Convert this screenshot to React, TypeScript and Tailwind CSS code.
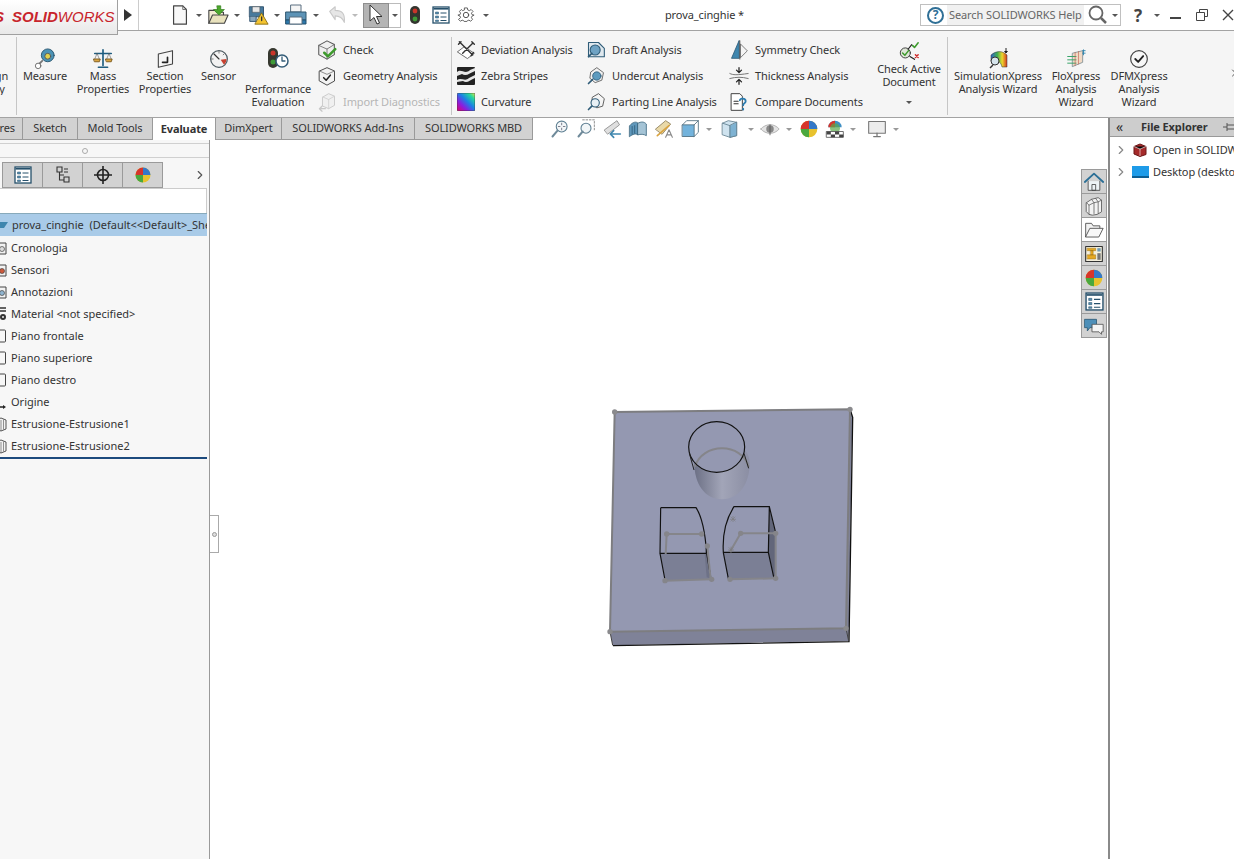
import React from 'react';
import { ChevronRight } from 'lucide-react';

type IconProps = { className?: string };

const Ico = ({ size = 22, children }: { size?: number; children: React.ReactNode }) => (
  <svg width={size} height={size} viewBox="0 0 24 24" fill="none" strokeLinejoin="round" strokeLinecap="round">
    {children}
  </svg>
);

const Drop = ({ className = '' }: IconProps) => (
  <span className={`inline-block w-0 h-0 border-l-[3px] border-r-[3px] border-t-[3px] border-l-transparent border-r-transparent border-t-[#555] ${className}`} />
);

/* ---------- top bar icons ---------- */
const NewDoc = () => (
  <Ico><path d="M5 2h10l4 4v16H5z" fill="#f8f8f8" stroke="#444" strokeWidth="1.3" /><path d="M15 2v4h4" stroke="#666" /></Ico>
);
const OpenDoc = () => (
  <Ico size={24}><path d="M2 21V7h7l2 2h7v3" fill="#f2ecd0" stroke="#444" strokeWidth="1.2" /><path d="M2 21l4-9h17l-4 9z" fill="#e9e2bd" stroke="#444" strokeWidth="1.2" /><path d="M11 2h4v4h4l-6 6-6-6h4z" fill="#4da82d" stroke="#2c7a16" strokeWidth=".7" /></Ico>
);
const SaveWarn = () => (
  <Ico><path d="M3 3h15v11H3z" fill="#47799c" stroke="#2d4f6b" /><path d="M6 3h8v6H6z" fill="#e8e8e8" stroke="#555" strokeWidth=".6" /><path d="M3 14v5h7v-5" fill="#8ba8bd" stroke="#2d4f6b" /><path d="M16 10l7 12H9z" fill="#f4c430" stroke="#8a6d10" /><path d="M16 14v4" stroke="#333" strokeWidth="1.4" /></Ico>
);
const PrintIcon = () => (
  <Ico size={24}><path d="M7 2h10v7H7z" fill="#f5f5f5" stroke="#5a6f80" /><path d="M2 9h20v8H2z" fill="#5d93b6" stroke="#2f566f" /><path d="M2 17h20v4H2z" fill="#2d78ab" stroke="#25516d" /><path d="M6 14h12v7H6z" fill="#fff" stroke="#5a6f80" /></Ico>
);
const UndoIcon = () => (
  <Ico><path d="M4 8l6-5v4c7 0 11 3 10 13-2-5-5-7-10-7v4z" fill="#e6e6e6" stroke="#c8c8c8" strokeWidth="1.2" /></Ico>
);
const CursorIcon = () => (
  <svg width="16" height="22" viewBox="0 0 16 22"><path d="M2 1v16l4-3.5 3 6.5 2.5-1-3-6.5h5.5z" fill="#fff" stroke="#333" strokeWidth="1" strokeLinejoin="round" /></svg>
);
const Traffic = ({ size = 20 }: { size?: number }) => (
  <svg width={size * 0.6} height={size} viewBox="0 0 12 20"><rect x="1" y="1" width="10" height="18" rx="5" fill="#33352f" /><circle cx="6" cy="6" r="2.4" fill="#c9352a" /><circle cx="6" cy="14" r="2.4" fill="#3f9a37" /></svg>
);
const ListIcon = ({ size = 18 }: { size?: number }) => (
  <svg width={size} height={size} viewBox="0 0 18 18"><rect x="1" y="1" width="16" height="16" fill="#fff" stroke="#26506b" strokeWidth="1.3" /><path d="M1.5 2h15v1.6h-15z" fill="#26506b" /><path d="M3.5 6h3v2h-3zM3.5 10h3v2h-3zM3.5 14h3v1.5h-3z" fill="#5b90b2" stroke="#26506b" strokeWidth=".5" /><path d="M8.5 7h6M8.5 11h6M8.5 14.500h6" stroke="#26506b" strokeWidth="1" /></svg>
);
const GearIcon = () => (
  <Ico size={18}><path d="M10 2h4l.6 3 2.400 1 2.600-1.700 2.800 2.800L20 9.700l1 2.300 3 .6v0l-3 1.400-1 2.300 1.700 2.600-2.800 2.800-2.600-1.700-2.400 1-.6 1h-4l-.6-1-2.400-1-2.600 1.700-2.800-2.800L4 16.300 3 14l-3-1.400 3-.6 1-2.300-1.700-2.600 2.800-2.800L7 6l2.400-1z" stroke="#444" strokeWidth="1.200" transform="translate(1.200 .8) scale(.9)" /><circle cx="12" cy="12" r="3.600" stroke="#444" strokeWidth="1.200" /></Ico>
);

/* ---------- ribbon icons ---------- */
const Measure = () => (
  <Ico size={22}><circle cx="15" cy="8" r="7" fill="#4c93b5" stroke="#27546d" /><circle cx="15" cy="9" r="3.200" fill="#e2d34d" stroke="#555" /><path d="M9 14l-4 4" stroke="#777" strokeWidth="2" /><circle cx="4.500" cy="19.500" r="3" fill="#fff" stroke="#666" /></Ico>
);
const MassIcon = () => (
  <Ico size={22}><path d="M12 2v17M3 6h18M7 21h10" stroke="#1f5d80" strokeWidth="1.800" /><path d="M2 12h7l-1 3H3zM15 12h7l-1 3h-5z" fill="#d9a441" stroke="#7d5a1a" /><path d="M5.500 6L3 12M5.500 6L8 12M18.500 6L16 12M18.500 6L21 12" stroke="#555" strokeWidth=".6" /></Ico>
);
const SectionIcon = () => (
  <Ico size={20}><path d="M4 6l17-4v16L4 22z" fill="#f5f5f5" stroke="#444" strokeWidth="1.300" /><path d="M9 16h6v-6" stroke="#222" strokeWidth="2" /></Ico>
);
const SensorIcon = () => (
  <Ico size={20}><circle cx="12" cy="12" r="10" fill="#f2f2f2" stroke="#4d5a60" strokeWidth="1.500" /><path d="M12 12L6 6" stroke="#333" strokeWidth="1.400" /><path d="M21 12a9 9 0 0 1-3 7l-4-6z" fill="#c8402f" /><path d="M3 12h2M12 3v2M18 6l-1 1" stroke="#666" /></Ico>
);
const PerfIcon = () => (
  <Ico size={24}><rect x="2" y="2" width="10" height="20" rx="5" fill="#36382f" /><circle cx="7" cy="7" r="2.500" fill="#c9352a" /><circle cx="7" cy="16" r="2.500" fill="#3f9a37" /><circle cx="16" cy="15" r="6" fill="#fff" stroke="#355d78" strokeWidth="1.500" /><path d="M16 11v4h3" stroke="#355d78" strokeWidth="1.300" /></Ico>
);
const Cube = ({ check = 'green' }: { check?: string }) => (
  <Ico size={22}><path d="M3 7l9-5 8 4v11l-8 5-9-5z" fill="#efefef" stroke="#555" strokeWidth="1.100" /><path d="M3 7l9 4 8-5M12 11v11" stroke="#666" strokeWidth=".9" /><path d="M9 15l4 4 8-8" stroke={check} strokeWidth="2.800" /></Ico>
);
const GeoIcon = () => (
  <Ico size={20}><path d="M3 6l9-4 9 4v12l-9 5-9-5z" fill="#f3f3f3" stroke="#4e4e4e" strokeWidth="1.200" /><path d="M3 6l9 4 9-4" stroke="#777" /><path d="M8 14l3 3 5-6" stroke="#222" strokeWidth="1.800" /></Ico>
);
const ImportIcon = () => (
  <Ico size={20}><path d="M7 6l7-4 7 3v11l-7 4-7-3z" fill="#f0f0f0" stroke="#c4c4c4" /><path d="M7 6l7 3 7-4M14 9v11" stroke="#cfcfcf" /><path d="M10 20H3M6 17l-3 3 3 3" stroke="#c8c8c8" strokeWidth="1.600" /></Ico>
);
const DevIcon = () => (
  <Ico size={20}><path d="M2 14l8-6 12 8-8 6z" fill="#fff" stroke="#555" /><path d="M4 2l16 16M20 4L8 16M6 2l-3 3M19 2l3 3M21 15l-3 4" stroke="#333" strokeWidth="1.700" /></Ico>
);
const Zebra = () => (
  <svg width="18" height="18" viewBox="0 0 18 18"><rect width="18" height="18" rx="1" fill="#222" /><path d="M0 5c4-4 8 3 13-2l5-2v3c-5 2-9 6-13 3L0 9zM0 13c4-3 8 2 12-2l6-3v3c-5 2-8 6-12 3l-6 1z" fill="#e6e6e6" /></svg>
);
const Curv = () => (
  <svg width="18" height="18" viewBox="0 0 18 18">
    <defs><linearGradient id="cg" x1="0" y1="1" x2="1" y2="0"><stop offset="0" stopColor="#e0006a" /><stop offset=".3" stopColor="#8a1ee0" /><stop offset=".55" stopColor="#1c7fe6" /><stop offset=".8" stopColor="#22d6a0" /><stop offset="1" stopColor="#d9e845" /></linearGradient></defs>
    <rect width="18" height="18" rx="1.500" fill="url(#cg)" stroke="#333" strokeWidth=".6" />
  </svg>
);
const DraftIcon = () => (
  <Ico size={20}><path d="M3 3h12l7 7v10H3z" fill="#dfe8ee" stroke="#2f5c78" strokeWidth="1.300" /><circle cx="11" cy="12" r="6" fill="#6fa3c4" stroke="#2f5c78" strokeWidth="1.300" /><path d="M3 20l4-4" stroke="#2f5c78" strokeWidth="2" /></Ico>
);
const UndercutIcon = () => (
  <Ico size={20}><path d="M6 7l7-5 8 6-2 9-8 3-6-5z" fill="#f1f1f1" stroke="#555" /><circle cx="13" cy="12" r="5" fill="#5d9bbf" stroke="#2f5c78" /><path d="M8 16l-5 5" stroke="#2f5c78" strokeWidth="2" /></Ico>
);
const PartingIcon = () => (
  <Ico size={20}><path d="M8 6l7-4 7 6-2 9-7 2-6-5z" fill="#f5f5f5" stroke="#444" /><circle cx="11" cy="13" r="5" fill="#e8f0f5" stroke="#2f5c78" strokeWidth="1.300" /><path d="M7 17l-4 4" stroke="#2f5c78" strokeWidth="2" /></Ico>
);
const SymIcon = () => (
  <Ico size={20}><path d="M12 1L3 22h9z" fill="#3f86ae" stroke="#2f5c78" /><path d="M14 5l8 8-8 8z" fill="#f4f4f4" stroke="#666" /><path d="M13 1v22" stroke="#444" /></Ico>
);
const ThickIcon = () => (
  <Ico size={20}><path d="M1 9c4 2 8 2 22 0M1 15c8-2 14-2 22 0" stroke="#777" strokeWidth="1.200" /><path d="M12 2v6M9 5l3 3 3-3M12 22v-6M9 19l3-3 3 3" stroke="#222" strokeWidth="1.500" /></Ico>
);
const CompareIcon = () => (
  <Ico size={20}><path d="M3 2h10l3 3v17H3z" fill="#fff" stroke="#444" strokeWidth="1.200" /><path d="M6 11h5M6 14h5" stroke="#333" strokeWidth="1.300" /><path d="M13 10c0-3 7-3 7 1 0 3-3 2-3 5M17 20v1" stroke="#2b7cb0" strokeWidth="2.200" /></Ico>
);
const CheckActive = () => (
  <Ico size={22}><circle cx="8" cy="13" r="5.500" fill="#dfe7d8" stroke="#333" /><path d="M5 13l2.500 2.500 4-5" stroke="#3d9a2c" strokeWidth="1.600" /><path d="M11 9l4-5M13 17l5 3" stroke="#222" strokeWidth="1.300" /><path d="M16 5l2 2 4-5" stroke="#3d9a2c" strokeWidth="1.700" /><path d="M19 15l3 3M22 15l-3 3" stroke="#d02a2a" strokeWidth="1.600" /></Ico>
);
const SimIcon = () => (
  <svg width="24" height="22" viewBox="0 0 24 22">
    <defs><linearGradient id="sg" x1="0" x2="1"><stop offset="0" stopColor="#2f63c9" /><stop offset=".4" stopColor="#42b04e" /><stop offset=".7" stopColor="#ecd62b" /><stop offset="1" stopColor="#d63b22" /></linearGradient></defs>
    <path d="M5 7c6-5 12-4 16 0v12h-5c-1-5-4-7-11-6z" fill="url(#sg)" stroke="#333" strokeWidth=".5" />
    <circle cx="9" cy="13" r="4" fill="#d6e4ec" stroke="#333" /><path d="M7 17l-3 3" stroke="#333" strokeWidth="1.500" /><path d="M20 0v4M18.500 3l1.500 2 1.500-2" stroke="#222" />
  </svg>
);
const FloIcon = () => (
  <Ico size={20}><path d="M8 5l12-3v14L8 21z" fill="#f1d9c4" stroke="#7a8b92" /><path d="M2 9h10M2 13h10M2 17h10" stroke="#3aa46a" strokeWidth="1.200" /><path d="M11 4v16M15 3v15" stroke="#c46a5a" strokeWidth=".8" /><path d="M20 2h3M20 5h3M21 1v6" stroke="#2f86ae" strokeWidth="1.100" /></Ico>
);
const DfmIcon = () => (
  <Ico size={20}><circle cx="12" cy="12" r="10" fill="#f7f7f7" stroke="#444" strokeWidth="1.400" /><path d="M7.500 12l3.500 3.500 6-7" stroke="#222" strokeWidth="2.200" /></Ico>
);

/* ---------- view toolbar icons ---------- */
const ZoomFit = () => (
  <Ico size={20}><circle cx="14" cy="9" r="6.500" fill="#f2f6f8" stroke="#5e7f92" strokeWidth="1.300" /><path d="M9 14l-6 7" stroke="#6f8a9a" strokeWidth="2.400" /><path d="M14 5v2M14 11v2M10 9h2M16 9h2" stroke="#667" /></Ico>
);
const ZoomArea = () => (
  <Ico size={20}><path d="M8 1h14v13" stroke="#777" strokeDasharray="2 2" /><circle cx="12" cy="11" r="6" fill="#f2f6f8" stroke="#5e7f92" strokeWidth="1.300" /><path d="M8 15l-5 6" stroke="#6f8a9a" strokeWidth="2.400" /></Ico>
);
const PrevView = () => (
  <Ico size={20}><path d="M3 13L18 2l3 5-14 11z" fill="#dfdfdf" stroke="#888" /><path d="M22 18H11M14 14l-4 4 4 4" stroke="#3f86ae" strokeWidth="2" /></Ico>
);
const SectView = () => (
  <Ico size={20}><path d="M2 8c4-5 8-5 10-3v14c-3-2-6-1-10 2z" fill="#5e97bb" stroke="#3c6880" /><path d="M12 5c4-2 7-2 10 1v14c-3-2-7-2-10-1z" fill="#a5c4d6" stroke="#3c6880" /><path d="M5 9v9M8 8v9" stroke="#2f5c78" /></Ico>
);
const DynIcon = () => (
  <Ico size={20}><path d="M2 12L14 2l6 4-10 12z" fill="#e9d9a8" stroke="#8a7b55" /><path d="M4 20L18 8" stroke="#d9a441" strokeWidth="2" /><path d="M14 22l4-9 4 9M16 19h4" stroke="#888" strokeWidth="1.300" /></Ico>
);
const OrientIcon = () => (
  <Ico size={20}><path d="M3 7h14v14H3z" fill="#73b3dc" stroke="#4a6a7c" /><path d="M3 7l5-5h14v14l-5 5M17 7l5-5" stroke="#4a6a7c" /></Ico>
);
const BoxView = () => (
  <Ico size={20}><path d="M3 5l7-3 10 2v16l-8 2-9-3z" fill="#cfe3ef" stroke="#62808f" /><path d="M3 5l9 3v14" stroke="#62808f" /><path d="M12 8v14l8-2V4z" fill="#7eb2d2" stroke="#62808f" /></Ico>
);
const EyeIcon = () => (
  <Ico size={20}><path d="M1 12c6-7 16-7 22 0-6 7-16 7-22 0z" fill="#e3e3e3" stroke="#aaa" /><circle cx="12" cy="12" r="4.500" fill="#888" /><path d="M12 7v12" stroke="#555" /></Ico>
);
const ColorWheel = ({ size = 20 }: { size?: number }) => (
  <Ico size={size}>
    <circle cx="12" cy="12" r="10" fill="#e8c22e" />
    <path d="M12 12V2a10 10 0 0 0-10 10z" fill="#d6352b" />
    <path d="M12 12V2a10 10 0 0 1 10 10z" fill="#3478c8" />
    <path d="M12 12H2a10 10 0 0 0 10 10z" fill="#4aa83e" />
  </Ico>
);
const ScenesIcon = () => (
  <Ico size={20}><path d="M12 2a8 8 0 0 0-8 8h16a8 8 0 0 0-8-8z" fill="#3f8fc4" /><path d="M4 10a8 8 0 0 1 8-8v8z" fill="#d6352b" /><circle cx="12" cy="11" r="6" fill="#5aa84a" opacity=".7" /><path d="M2 15h20v7H2z" fill="#fff" stroke="#555" /><path d="M2 15h5v3.500H2zM12 15h5v3.500h-5zM7 18.500h5V22H7zM17 18.500h5V22h-5z" fill="#444" /></Ico>
);
const Monitor = () => (
  <Ico size={20}><path d="M2 3h20v14H2z" fill="#ededed" stroke="#777" strokeWidth="1.300" /><path d="M12 17v4M8 21h8" stroke="#777" strokeWidth="1.500" /></Ico>
);

/* ---------- right tab icons ---------- */
const HomeIcon = () => (
  <Ico size={20}><path d="M1 12L12 2l11 10" stroke="#2b6f96" strokeWidth="2.200" /><path d="M5 11v11h14V11" fill="#eef3f6" stroke="#444" /><path d="M10 15h4v7h-4z" stroke="#444" /></Ico>
);
const BooksIcon = () => (
  <Ico size={20}><path d="M3 8l6-4 8-2 4 3v14l-5 3-6 1-4-1-3-3z" fill="#f3f3f3" stroke="#555" /><path d="M3 8l3 3v11M9 4l3 4v13M14 3l3 4v14M6 11l6-3 5-1 4-2" stroke="#555" strokeWidth=".9" /></Ico>
);
const FolderIcon = () => (
  <Ico size={20}><path d="M2 20V4h7l2 3h8v3" fill="#f2f2f2" stroke="#444" /><path d="M2 20l5-10h16l-5 10z" fill="#f8f8f8" stroke="#444" /></Ico>
);
const PaletteIcon = () => (
  <Ico size={20}><path d="M2 3h20v18H2z" fill="#f4efdc" stroke="#333" strokeWidth="1.300" /><path d="M4 5h10v3H4zM8 8h3v5H8zM4 13h10v5H4z" fill="#e5a823" stroke="#8a6410" strokeWidth=".5" /><path d="M16 5h4v4h-4z" fill="#6f9ab5" /><path d="M16 11h4v8h-4z" fill="#777" /></Ico>
);
const ChatIcon = () => (
  <Ico size={20}><path d="M1 4h14v10H7l-3 4v-4H1z" fill="#4d8fb8" stroke="#2c5a76" /><path d="M10 10h13v9h-2v3l-3-3h-8z" fill="#f4f4f4" stroke="#555" /></Ico>
);

/* ---------- tree icons, cut by the panel edge like the original ---------- */
const Clip = ({ children, h = 16 }: { children: React.ReactNode; h?: number }) => (
  <svg width="8" height={h} viewBox={`0 0 8 ${h}`} className="block">{children}</svg>
);
const FolderClip = ({ c }: { c: string }) => (
  <Clip><path d="M-4 3H6v11H-4z" fill="#f2f2f2" stroke="#444" /><circle cx="2" cy="9" r="2.500" fill={c} stroke="#444" strokeWidth=".7" /></Clip>
);
const MaterialClip = () => (
  <Clip><path d="M0 2h6M0 5h6" stroke="#333" strokeWidth="1.400" /><circle cx="3" cy="11" r="3" fill="#333" /><circle cx="3" cy="11" r="1" fill="#eee" /></Clip>
);
const PlaneClip = () => (
  <Clip><path d="M-4 2h8.500q1 0 1 1v10q0 1-1 1H-4" fill="none" stroke="#444" /></Clip>
);
const OriginClip = () => (
  <Clip><path d="M0 13h4" stroke="#222" strokeWidth="1.500" /><path d="M3 11l3 2-3 2z" fill="#222" /></Clip>
);
const ExtrudeClip = () => (
  <Clip><path d="M-4 4l5-2 5 2v9l-5 2-5-2z" fill="#f2f2f2" stroke="#555" /><path d="M1 4v11M3.500 3.500v10" stroke="#666" strokeWidth=".7" /></Clip>
);

/* ---------- ribbon parts ---------- */
const BigBtn = ({ w, icon, lines, iconMt = 'mt-[11px]', gap = '', drop = false }: { w: string; icon: React.ReactNode; lines: string[]; iconMt?: string; gap?: string; drop?: boolean }) => (
  <div className={`${w} shrink-0 flex flex-col items-center`}>
    <div className={`${iconMt} h-[21px] flex items-center justify-center`}>{icon}</div>
    <div className={`${gap} text-center leading-[13px] whitespace-nowrap`}>
      {lines.map((l) => <div key={l}>{l}</div>)}
    </div>
    {drop && <Drop className="mt-[13px]" />}
  </div>
);

const SmallBtn = ({ icon, label, muted = false, iconW = 'w-[20px]', gap = 'gap-[6px]' }: { icon: React.ReactNode; label: string; muted?: boolean; iconW?: string; gap?: string }) => (
  <div className={`h-[26px] flex items-center ${gap} whitespace-nowrap ${muted ? 'text-[#b5b5b5]' : ''}`}>
    <div className={`${iconW} flex justify-center`}>{icon}</div>
    {label}
  </div>
);

const Sep = () => <div className="w-px h-[78px] bg-[#c6c6c6] shrink-0" />;

const tabs = [
  { label: 'res', w: 'w-[23px]', justify: 'justify-end pr-[7px]' },
  { label: 'Sketch', w: 'w-[55px]' },
  { label: 'Mold Tools', w: 'w-[75px]' },
  { label: 'Evaluate', w: 'w-[63px]', active: true },
  { label: 'DimXpert', w: 'w-[66px]' },
  { label: 'SOLIDWORKS Add-Ins', w: 'w-[133px]' },
  { label: 'SOLIDWORKS MBD', w: 'w-[118px]' },
];

const treeRows: { label: string; icon: React.ReactNode }[] = [
  { label: 'Cronologia', icon: <FolderClip c="#dddddd" /> },
  { label: 'Sensori', icon: <FolderClip c="#cf5a3c" /> },
  { label: 'Annotazioni', icon: <FolderClip c="#8fb4cf" /> },
  { label: 'Material <not specified>', icon: <MaterialClip /> },
  { label: 'Piano frontale', icon: <PlaneClip /> },
  { label: 'Piano superiore', icon: <PlaneClip /> },
  { label: 'Piano destro', icon: <PlaneClip /> },
  { label: 'Origine', icon: <OriginClip /> },
  { label: 'Estrusione-Estrusione1', icon: <ExtrudeClip /> },
  { label: 'Estrusione-Estrusione2', icon: <ExtrudeClip /> },
];

const viewTools: { icon: React.ReactNode; slot: string; drop?: boolean }[] = [
  { icon: <ZoomFit />, slot: 'w-[26px]' },
  { icon: <ZoomArea />, slot: 'w-[26px]' },
  { icon: <PrevView />, slot: 'w-[26px]' },
  { icon: <SectView />, slot: 'w-[26px]' },
  { icon: <DynIcon />, slot: 'w-[26px]' },
  { icon: <OrientIcon />, slot: 'w-[26px]', drop: true },
  { icon: <BoxView />, slot: 'w-[30px]', drop: true },
  { icon: <EyeIcon />, slot: 'w-[26px]', drop: true },
  { icon: <ColorWheel />, slot: 'w-[28px]' },
  { icon: <ScenesIcon />, slot: 'w-[24px]', drop: true },
  { icon: <Monitor />, slot: 'ml-[5px] w-[26px]', drop: true },
];

const Model = () => (
  <svg width="265" height="255" viewBox="0 0 795 765" className="shrink-0 ml-[390px] mt-[260px]">
    <defs>
      <linearGradient id="hole" x1="0" x2="1"><stop offset="0" stopColor="#6c7085" /><stop offset=".5" stopColor="#a2a5b8" /><stop offset="1" stopColor="#8b8ea3" /></linearGradient>
    </defs>
    {/* body */}
    <path d="M750 28l7 22-11 673-708 13-8-41 708-10z" fill="#7f8298" />
    <path d="M44 36L750 28 738 685 30 695z" fill="#9498b1" />
    <path d="M751 30l7 22-11 673-708 12" fill="none" stroke="#111" strokeWidth="4" />
    <path d="M44 36L750 28 738 685 30 695z" fill="none" stroke="#7d7d80" strokeWidth="6" />
    <path d="M30 695l8 41M738 685l8 38" stroke="#444" strokeWidth="3" />
    {[[44, 36], [750, 28], [738, 685], [30, 695]].map(([x, y]) => <circle key={x} cx={x} cy={y} r="8" fill="#8a8a8d" />)}
    {/* round hole */}
    <path d="M283 190c0 60 30 108 83 108s83-50 83-108c0-30-20-45-20-45H283z" fill="url(#hole)" />
    <ellipse cx="350" cy="141" rx="84" ry="76" fill="#9498b1" />
    <path d="M285 200c10-35 45-55 81-55s70 20 80 55" fill="none" stroke="#85858a" strokeWidth="6" />
    <ellipse cx="350" cy="141" rx="84" ry="76" fill="none" stroke="#111" strokeWidth="3.500" />
    <path d="M268 160l14 50M432 160l14 45" stroke="#222" strokeWidth="3" />
    {/* left pocket */}
    <path d="M180 462h138l17 76-139 4z" fill="#7b7f95" />
    <path d="M318 440l16 96-14-4-6-70z" fill="#6e7287" />
    <path d="M182 323h106c20 30 28 80 32 137l12 70M182 323l-2 137h138M180 460l15 80" fill="none" stroke="#111" strokeWidth="3.500" />
    <path d="M200 402h105M200 402l-3 60M195 542l140-4M322 438l10 100" fill="none" stroke="#85858a" strokeWidth="6" />
    {[[200, 402], [305, 402], [322, 438], [195, 542], [335, 538]].map(([x, y]) => <circle key={x} cx={x} cy={y} r="8" fill="#85858a" />)}
    {/* right pocket */}
    <path d="M370 458h135l17 77-137 3z" fill="#7b7f95" />
    <path d="M508 325l19 75v135h-5l-17-78z" fill="#62667a" />
    <path d="M402 320h106l-3 137H370c-3-50 8-100 32-137zM370 458l15 78M505 457l17 78M508 320l19 78" fill="none" stroke="#111" strokeWidth="3.500" />
    <path d="M422 400h105v135M422 400l-32 55M388 538l139-3" fill="none" stroke="#85858a" strokeWidth="6" />
    {[[422, 400], [527, 400], [390, 538], [527, 535]].map(([x, y]) => <circle key={x} cx={x} cy={y} r="8" fill="#85858a" />)}
    <path d="M390 358h18M399 348v18M392 350l14 14M406 350l-14 14M384 450h18M393 440v20M386 442l14 14M400 442l-14 14" stroke="#7d7d80" strokeWidth="2" />
  </svg>
);

export default function App() {
  return (
    <div className="w-[1234px] h-[859px] overflow-hidden flex flex-col bg-white text-[#333] text-[11px] tracking-[-0.1px] font-['Noto_Sans','Open_Sans',sans-serif]">
      {/* Title bar */}
      <div className="h-[31px] shrink-0 flex items-center border-b border-[#a3a3a3] bg-white">
        <div className="relative z-10 self-start w-[118px] h-[35px] shrink-0 border-r border-b border-[#a0a0a0] bg-gradient-to-b from-white to-[#e9e9e9] overflow-hidden flex items-center text-[#c8252c] text-[15px] tracking-normal italic font-['Liberation_Sans',sans-serif] whitespace-nowrap">
          <span className="-ml-[6px] w-[18px] font-bold text-[#c8252c]">S</span>
          <span className="font-bold">SOLID</span>
          <span>WORKS</span>
        </div>
        <div className="w-[20px] flex justify-center">
          <span className="w-0 h-0 border-y-[6px] border-l-[8px] border-y-transparent border-l-[#333]" />
        </div>
        <div className="w-px h-[30px] bg-[#ccc] mr-[30px]" />
        <div className="w-[22px] flex justify-center"><NewDoc /></div>
        <div className="w-[16px] flex justify-center"><Drop /></div>
        <div className="w-[22px] flex justify-center"><OpenDoc /></div>
        <div className="w-[16px] flex justify-center"><Drop /></div>
        <div className="w-[24px] flex justify-center ml-[1px]"><SaveWarn /></div>
        <div className="w-[14px] flex justify-center"><Drop /></div>
        <div className="w-[24px] flex justify-center"><PrintIcon /></div>
        <div className="w-[16px] flex justify-center"><Drop /></div>
        <div className="w-[22px] flex justify-center ml-[2px]"><UndoIcon /></div>
        <div className="w-[14px] flex justify-center"><Drop className="border-t-[#bbb]" /></div>
        <div className="ml-[1px] w-[26px] h-[25px] bg-[#b4b4b4] border border-[#8e8e8e] flex items-center justify-center"><CursorIcon /></div>
        <div className="w-[12px] h-[25px] border border-l-0 border-[#bbb] flex items-center justify-center"><Drop /></div>
        <div className="w-[28px] flex justify-center"><Traffic /></div>
        <div className="w-[24px] flex justify-center"><ListIcon /></div>
        <div className="w-[26px] flex justify-center"><GearIcon /></div>
        <div className="w-[14px] flex justify-center"><Drop /></div>
        <div className="flex-1 text-center pr-[4px]">prova_cinghie *</div>
        <div className="w-[201px] h-[22px] border border-[#c0c0c0] flex items-center mr-[9px] shrink-0">
          <span className="ml-[6px] w-[17px] h-[17px] rounded-full border-2 border-[#2f6f96] flex items-center justify-center text-[12px] font-bold text-[#2f6f96] leading-none">?</span>
          <span className="ml-[3px] w-[137px] h-[20px] bg-[#f1f1f1] text-[#666] flex items-center pl-[2px] whitespace-nowrap">Search SOLIDWORKS Help</span>
          <svg width="22" height="20" viewBox="0 0 22 20" className="ml-[3px]"><circle cx="9" cy="8" r="6.500" fill="none" stroke="#666" strokeWidth="1.800" /><path d="M14 13l5 5" stroke="#666" strokeWidth="2.500" /></svg>
          <Drop className="ml-[3px]" />
        </div>
        <span className="w-[16px] text-center text-[17px] font-bold text-[#444] leading-none">?</span>
        <Drop className="ml-[8px]" />
        <span className="ml-[10px] w-[11px] h-[2px] mt-[6px] bg-[#444]" />
        <svg width="12" height="12" viewBox="0 0 12 12" className="ml-[15px]"><path d="M3.500 3V.5h8v7H8.500M.5 3.500h8v8h-8z" fill="none" stroke="#444" /></svg>
        <svg width="12" height="12" viewBox="0 0 12 12" className="ml-[14px]"><path d="M1 1l10 10M11 1L1 11" stroke="#444" strokeWidth="1.400" /></svg>
      </div>

      {/* Ribbon */}
      <div className="h-[86px] shrink-0 bg-[#f5f5f5] flex items-start pt-[6px] overflow-hidden">
        <div className="w-[16px] shrink-0 overflow-hidden">
          <div className="-ml-[28px] w-[37px] flex flex-col items-center">
            <div className="mt-[11px] h-[21px]" />
            <div className="text-center leading-[13px] whitespace-nowrap"><div>Design</div><div>Study</div></div>
          </div>
        </div>
        <Sep />
        <BigBtn w="w-[56px]" icon={<Measure />} lines={['Measure']} />
        <BigBtn w="w-[60px]" icon={<MassIcon />} lines={['Mass', 'Properties']} />
        <BigBtn w="w-[64px]" icon={<SectionIcon />} lines={['Section', 'Properties']} />
        <BigBtn w="w-[43px]" icon={<SensorIcon />} lines={['Sensor']} />
        <BigBtn w="w-[76px]" icon={<PerfIcon />} lines={['Performance', 'Evaluation']} iconMt="mt-[10px]" gap="mt-[14px]" />
        <div className="w-[134px] shrink-0 flex flex-col">
          <SmallBtn icon={<Cube check="#3d9a2c" />} label="Check" iconW="w-[22px]" gap="gap-[5px]" />
          <SmallBtn icon={<GeoIcon />} label="Geometry Analysis" iconW="w-[22px]" gap="gap-[5px]" />
          <SmallBtn icon={<ImportIcon />} label="Import Diagnostics" muted iconW="w-[22px]" gap="gap-[5px]" />
        </div>
        <div className="ml-[1px]"><Sep /></div>
        <div className="w-[134px] shrink-0 flex flex-col pl-[4px]">
          <SmallBtn icon={<DevIcon />} label="Deviation Analysis" gap="gap-[5px]" />
          <SmallBtn icon={<Zebra />} label="Zebra Stripes" gap="gap-[5px]" />
          <SmallBtn icon={<Curv />} label="Curvature" gap="gap-[5px]" />
        </div>
        <div className="w-[143px] shrink-0 flex flex-col">
          <SmallBtn icon={<DraftIcon />} label="Draft Analysis" />
          <SmallBtn icon={<UndercutIcon />} label="Undercut Analysis" />
          <SmallBtn icon={<PartingIcon />} label="Parting Line Analysis" />
        </div>
        <div className="w-[143px] shrink-0 flex flex-col">
          <SmallBtn icon={<SymIcon />} label="Symmetry Check" />
          <SmallBtn icon={<ThickIcon />} label="Thickness Analysis" />
          <SmallBtn icon={<CompareIcon />} label="Compare Documents" />
        </div>
        <BigBtn w="w-[74px]" icon={<CheckActive />} lines={['Check Active', 'Document']} iconMt="mt-[4px]" drop />
        <div className="ml-[1px]"><Sep /></div>
        <BigBtn w="w-[100px]" icon={<SimIcon />} lines={['SimulationXpress', 'Analysis Wizard']} />
        <BigBtn w="w-[56px]" icon={<FloIcon />} lines={['FloXpress', 'Analysis', 'Wizard']} />
        <BigBtn w="w-[70px]" icon={<DfmIcon />} lines={['DFMXpress', 'Analysis', 'Wizard']} />
        <ChevronRight size={12} className="ml-[54px] mt-[30px] shrink-0 text-[#555]" />
      </div>

      {/* Main */}
      <div className="flex-1 flex min-h-0 border-t border-[#a3a3a3]">
        <div className="flex-1 flex flex-col min-w-0">
          {/* Tabs + view toolbar */}
          <div className="h-[22px] shrink-0 flex items-center">
            {tabs.map((t) => (
              <div
                key={t.label}
                className={`${t.w} h-[22px] flex items-center ${t.justify ?? 'justify-center'} border-r border-[#9a9a9a] whitespace-nowrap ${t.active ? 'bg-white font-bold' : 'bg-[#d2d2d2] border-b'}`}
              >
                {t.label}
              </div>
            ))}
            <div className="ml-[14px] flex items-center">
              {viewTools.map((v, i) => (
                <React.Fragment key={i}>
                  <div className={`${v.slot} flex justify-center`}>{v.icon}</div>
                  {v.drop && <div className="w-[12px] flex justify-center"><Drop className="border-t-[#999]" /></div>}
                </React.Fragment>
              ))}
            </div>
          </div>

          <div className="flex-1 flex min-h-0">
            {/* Feature manager */}
            <div className="w-[210px] shrink-0 bg-[#f7f7f7] border-r border-[#9a9a9a] flex flex-col tracking-normal">
              <div className="h-[15px] mt-[3px] border-y border-[#d0d0d0] flex items-center pl-[82px]">
                <span className="w-[6px] h-[6px] rounded-full border border-[#aaa]" />
              </div>
              <div className="h-[30px] flex items-end pl-[2px]">
                {[<ListIcon key="a" />, <TreeTab key="b" />, <Crosshair key="c" />, <ColorWheel key="d" size={18} />].map((ic, i) => (
                  <div key={i} className="w-[41px] h-[26px] bg-[#d2d2d2] border border-[#9a9a9a] -ml-px first:ml-0 flex items-center justify-center">{ic}</div>
                ))}
                <ChevronRight size={14} className="ml-[30px] mb-[6px] text-[#555]" />
              </div>
              <div className="h-[26px] mr-[2px] border-y border-r border-[#ccc] bg-white" />
              <div className="h-[23px] mb-[1px] bg-[#a9cbe8] -mt-px flex items-center mr-[2px] overflow-hidden whitespace-nowrap border-t border-[#8ab]">
                <svg width="12" height="10" viewBox="0 0 12 10" className="shrink-0"><path d="M0 2h8L4 8H0z" fill="#3f86ae" /></svg>
                <span>prova_cinghie&nbsp; (Default&lt;&lt;Default&gt;_Sheet</span>
              </div>
              {treeRows.map((r) => (
                <div key={r.label} className="h-[22px] flex items-center shrink-0">
                  <span className="w-[11px] shrink-0">{r.icon}</span>
                  {r.label}
                </div>
              ))}
              <div className="h-[2px] mr-[2px] bg-[#1c4a7d]" />
            </div>

            {/* Viewport */}
            <div className="relative flex-1 flex items-start min-w-0">
              <div className="absolute left-0 top-[375px] w-[9px] h-[38px] bg-white border border-l-0 border-[#aaa] flex items-center justify-center">
                <span className="w-[5px] h-[5px] rounded-full border border-[#999] bg-[#ddd]" />
              </div>
              <Model />
              <div className="ml-auto mr-px mt-[29px] w-[26px] shrink-0 flex flex-col">
                {[<HomeIcon key="1" />, <BooksIcon key="2" />, <FolderIcon key="3" />, <PaletteIcon key="4" />, <ColorWheel key="5" />, <ListIcon key="6" size={19} />, <ChatIcon key="7" />].map((ic, i) => (
                  <div key={i} className={`h-[25px] flex items-center justify-center border border-[#9a9a9a] -mt-px first:mt-0 ${i === 2 ? 'bg-white' : 'bg-[#d2d2d2]'}`}>{ic}</div>
                ))}
              </div>
            </div>
          </div>
        </div>

        {/* File explorer */}
        <div className="w-[126px] shrink-0 border-l-2 border-[#8a8a8a] flex flex-col">
          <div className="h-[19px] bg-[#cdcdcd] border-b border-[#999] flex items-center whitespace-nowrap overflow-hidden">
            <span className="ml-[6px] w-[10px] shrink-0 text-[14px] leading-none text-[#333]">«</span>
            <span className="ml-[15px] font-bold">File Explorer</span>
            <svg width="12" height="10" viewBox="0 0 12 10" className="ml-[15px] shrink-0"><path d="M0 5h4M4 1v8M4 3h8M4 7h8" stroke="#555" /></svg>
          </div>
          <div className="h-[22px] mt-[2px] flex items-center whitespace-nowrap overflow-hidden">
            <ChevronRight size={14} className="ml-[4px] shrink-0 text-[#888]" />
            <svg width="16" height="14" viewBox="0 0 16 14" className="ml-[4px] shrink-0"><path d="M8 1l6 2.500v8L8 13.500 2 11V3.500z" fill="#a52a2a" stroke="#6b1717" /><path d="M2 3.500L8 6l6-2.500M8 6v7" stroke="#fff" strokeWidth=".6" /></svg>
            <span className="ml-[5px]">Open in SOLIDWORKS</span>
          </div>
          <div className="h-[22px] flex items-center whitespace-nowrap overflow-hidden">
            <ChevronRight size={14} className="ml-[4px] shrink-0 text-[#888]" />
            <span className="ml-[4px] w-[17px] h-[12px] bg-[#1e9be8] border-b-2 border-[#0c5f94] shrink-0" />
            <span className="ml-[4px]">Desktop (desktop)</span>
          </div>
        </div>
      </div>
    </div>
  );
}

function TreeTab() {
  return (
    <svg width="16" height="18" viewBox="0 0 16 18"><path d="M2 1h5v5H2zM9 11h5v5H9zM4.500 6v8H9M4.500 9H9" fill="none" stroke="#333" strokeWidth="1.100" /><path d="M9 3h4M9 6h4" stroke="#333" /></svg>
  );
}

function Crosshair() {
  return (
    <svg width="18" height="18" viewBox="0 0 18 18"><circle cx="9" cy="9" r="5.500" fill="none" stroke="#222" strokeWidth="1.600" /><path d="M9 0v18M0 9h18" stroke="#222" strokeWidth="1.600" /></svg>
  );
}
